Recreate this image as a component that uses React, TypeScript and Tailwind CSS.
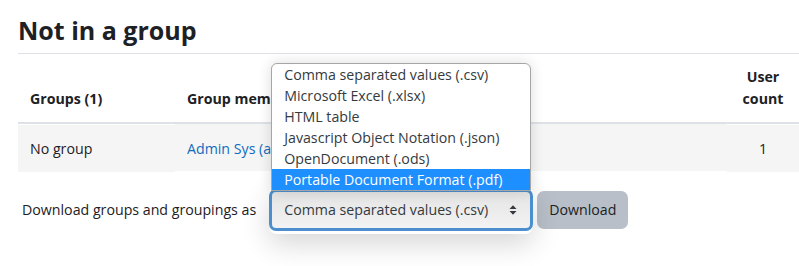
const options = [
  "Comma separated values (.csv)",
  "Microsoft Excel (.xlsx)",
  "HTML table",
  "Javascript Object Notation (.json)",
  "OpenDocument (.ods)",
  "Portable Document Format (.pdf)",
];

function SortArrows() {
  return (
    <svg width="10" height="12" viewBox="0 0 10 12" className="shrink-0">
      <path d="M1.5 5L5 1.2 8.5 5z" fill="#343a40" />
      <path d="M1.5 7L5 10.8 8.5 7z" fill="#343a40" />
    </svg>
  );
}

export default function App() {
  return (
    <div
      className="w-[799px] h-[266px] overflow-hidden bg-white pl-[18px] pt-[13px] text-[#1d2125] text-[14.2px]"
      style={{ fontFamily: '"Open Sans", "Noto Sans", sans-serif' }}
    >
      <h3 className="text-[25px] font-bold leading-[34px] pb-[6px] border-b border-[#dee2e6]">
        Not in a group
      </h3>

      <table className="w-[781px] border-collapse table-fixed">
        <thead>
          <tr className="border-b-2 border-[#dee2e6]">
            <th className="w-[157px] px-3 pt-3 pb-3 text-left align-bottom font-bold leading-[22px]">
              Groups (1)
            </th>
            <th className="px-3 pb-3 text-left align-bottom font-bold leading-[22px]">
              <span className="block w-[84px] overflow-hidden whitespace-nowrap">Group members</span>
            </th>
            <th className="w-[72px] px-1 pt-3 pb-3 text-center align-bottom font-bold leading-[22px]">
              User
              <br />
              count
            </th>
          </tr>
        </thead>
        <tbody>
          <tr className="bg-[#f5f5f5]">
            <td className="px-3 pt-3 pb-3 leading-[23px] relative top-[1px]">No group</td>
            <td className="px-3 py-3 leading-[23px]">
              <span className="block w-[84px] overflow-hidden whitespace-nowrap text-[#0f6cbf] relative top-[1px]">
                Admin Sys (admin)
              </span>
            </td>
            <td className="px-1 py-3 leading-[23px] text-center relative top-[1px]">1</td>
          </tr>
        </tbody>
      </table>

      <div className="flex items-center mt-[18px] pl-1">
        <span className="mr-[13px] leading-[22px]">Download groups and groupings as</span>
        <div className="relative">
          <div className="absolute left-0 top-[-3px] w-[264px] h-[48px] rounded-[8px] shadow-[0_10px_28px_rgba(0,0,0,0.16)] pointer-events-none" />
          <div className="relative flex items-center w-[264px] h-[42px] rounded-[7px] border-[3px] border-[#4b8fce] bg-gradient-to-b from-[#e4e4e4] to-[#f3f3f3] pl-[12px] pr-[12px]">
            <span className="flex-1 leading-[22px] text-[#343a40]">{options[0]}</span>
            <SortArrows />
          </div>
          <div className="absolute left-[2px] bottom-[40px] w-[260px] bg-white border border-[#a6a6a6] rounded-t-[6px] shadow-[0_0_14px_rgba(0,0,0,0.14)] overflow-hidden z-10">
            {options.map((o, i) => (
              <div
                key={o}
                className={
                  i === options.length - 1
                    ? "h-[21px] leading-[21px] px-3 bg-[#1e8fff] text-white"
                    : "h-[21px] leading-[21px] px-3 text-[#343a40]"
                }
              >
                {o}
              </div>
            ))}
          </div>
        </div>
        <button className="ml-[4px] h-[38px] px-3 rounded-[7px] bg-[#b8bfc8] text-[#1d2125] leading-[22px]">
          Download
        </button>
      </div>
    </div>
  );
}
